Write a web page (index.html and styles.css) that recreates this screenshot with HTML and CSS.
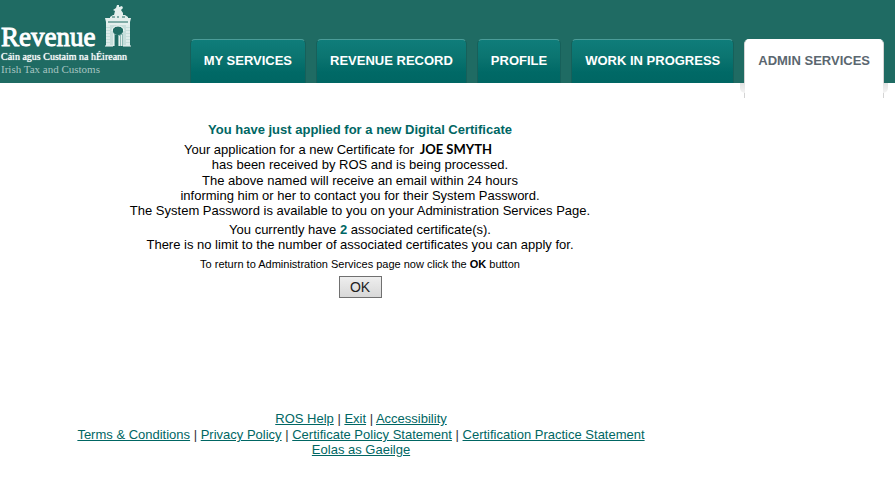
FILE: index.html
```
<!DOCTYPE html>
<html lang="en">
<head>
<meta charset="utf-8">
<title>Revenue - Admin Services</title>
<link rel="stylesheet" href="styles.css">
</head>
<body>
<header class="masthead">
  <div class="brand">
    <div class="brand-top">
      <span class="brand-name">Revenue</span>
      <svg class="brand-mark" viewBox="0 0 28 44" width="28" height="44" aria-hidden="true">
        <path fill="#e4efed" d="M13 1h2v2l3-1 1 2-2 2 2 3v2h2l3 2v4H6v-4l3-2h1l1-4-2-1 3-2zM1 14h5v3h16v-3h5l-1 4v3H2v-3z"/>
        <path fill="#c6dedb" fill-rule="evenodd" d="M2 21h24v21H15V28h-3v14H2zM9 26a5 4 0 0 1 10 0q0 4-5 4t-5-4z"/>
        <path fill="none" stroke="#1f6b63" d="M8 13h3m2 0h2m3 0h3M4 18h20"/>
        <path fill="none" stroke="#f5faf9" d="M2 22h4M2 25h4M2 28h4M2 31h4M2 34h4M2 37h4M2 40h4M22 22h4M22 25h4M22 28h4M22 31h4M22 34h4M22 37h4M22 40h4M1 42h8M19 42h8M8 27a6 5 0 0 1 12 0"/>
        <path fill="#8fbab5" d="M9 30h10v12H9z"/>
        <path fill="#1f6b63" d="M11 31h3v11h-3z"/>
        <ellipse fill="#1f6b63" cx="14" cy="27" rx="5" ry="4"/>
        <path fill="none" stroke="#e4efed" d="M15.500 32v10M17.500 31v11M9.500 30v12"/>
      </svg>
    </div>
    <div class="brand-irish">Cáin agus Custaim na hÉireann</div>
    <div class="brand-english">Irish Tax and Customs</div>
  </div>
  <nav class="tabs">
    <a class="tab" href="#">MY SERVICES</a>
    <a class="tab" href="#">REVENUE RECORD</a>
    <a class="tab" href="#">PROFILE</a>
    <a class="tab" href="#">WORK IN PROGRESS</a>
    <a class="tab tab-active" href="#" aria-current="page">ADMIN SERVICES</a>
  </nav>
</header>
<div class="page">
  <main class="notice">
    <h1>You have just applied for a new Digital Certificate</h1>
    <p class="application">Your application for a new Certificate for <b class="applicant">JOE SMYTH</b></p>
    <p class="received">has been received by ROS and is being processed.</p>
    <p>The above named will receive an email within 24 hours<br>informing him or her to contact you for their System Password.<br>The System Password is available to you on your Administration Services Page.</p>
    <p class="count">You currently have <b class="number">2</b> associated certificate(s).<br>There is no limit to the number of associated certificates you can apply for.</p>
    <p class="hint">To return to Administration Services page now click the <b>OK</b> button</p>
    <button class="ok" type="button">OK</button>
  </main>
  <footer class="links">
    <div class="links-help"><a href="#">ROS Help</a> | <a href="#">Exit</a> | <a href="#">Accessibility</a></div>
    <div><a href="#">Terms &amp; Conditions</a> | <a href="#">Privacy Policy</a> | <a href="#">Certificate Policy Statement</a> | <a href="#">Certification Practice Statement</a></div>
    <div><a href="#">Eolas as Gaeilge</a></div>
  </footer>
</div>
</body>
</html>
```
FILE: styles.css
```
* {
  box-sizing: border-box;
}

body {
  margin: 0;
  background: #fff;
  color: #000;
  font: 13px/15px "Liberation Sans", Arial, sans-serif;
}

.masthead {
  display: flex;
  justify-content: space-between;
  height: 83px;
  padding-right: 11px;
  background: #1f6b63;
}

.brand {
  padding: 5px 0 0 1px;
  color: #fff;
  font-family: "Liberation Serif", "Times New Roman", serif;
  white-space: nowrap;
}

.brand-top {
  display: flex;
  align-items: flex-end;
  gap: 9px;
  height: 46px;
}

.brand-name {
  font-size: 27px;
  line-height: 27px;
  -webkit-text-stroke: 1px #fff;
}

.brand-mark {
  display: block;
  margin-bottom: 3px;
}

.brand-irish {
  font-size: 10px;
  line-height: 12px;
  text-shadow: 0 0 1px #fff;
}

.brand-english {
  color: #a5c4c1;
  font-size: 11px;
  line-height: 12px;
}

.tabs {
  display: flex;
  align-items: flex-start;
  gap: 10px;
  padding-top: 39px;
}

.tab {
  height: 44px;
  padding: 13px 13px 0;
  border: 1px solid #17605a;
  border-top-color: #4b9c98;
  border-bottom: 0;
  border-radius: 5px 5px 0 0;
  background: linear-gradient(#0f7d7a, #0b7470 40%, #006966 75%, #006663);
  color: #fff;
  font-size: 13px;
  font-weight: bold;
  text-decoration: none;
  white-space: nowrap;
}

.tab-active {
  position: relative;
  height: 59px;
  border-color: #fff #d4d4d4 #fff;
  background: #fff;
  color: #5b6770;
}

.tab-active::before,
.tab-active::after {
  content: "";
  position: absolute;
  top: 43px;
  width: 5px;
  height: 10px;
  background: linear-gradient(#e2e2e2, #f4f4f4);
}

.tab-active::before {
  right: 100%;
  border-radius: 0 0 0 5px;
}

.tab-active::after {
  left: 100%;
  border-radius: 0 0 5px 0;
}

.page {
  max-width: 720px;
}

.notice {
  padding-top: 39px;
  text-align: center;
}

h1 {
  margin: 0 0 5px;
  color: #006663;
  font-size: 13px;
}

p {
  margin: 0;
}

.application {
  padding-right: 44px;
}

.applicant {
  margin-left: 2px;
  font-family: Lato, Calibri, sans-serif;
}

.received {
  margin-bottom: 1px;
}

.number {
  color: #006663;
}

.count {
  margin-top: 4px;
}

.hint {
  margin-top: 5px;
  font-size: 11px;
}

.ok {
  width: 43px;
  height: 22px;
  margin-top: 4px;
  padding: 0;
  border: 1px solid #707070;
  background: linear-gradient(#eee, #d8d8d8);
  color: #222;
  font: 14px/16px "Liberation Sans", Arial, sans-serif;
}

.links {
  padding: 113px 0 44px 2px;
  color: #333;
  text-align: center;
}

.links-help {
  margin-bottom: 1px;
}

.links a {
  color: #006663;
}
```
